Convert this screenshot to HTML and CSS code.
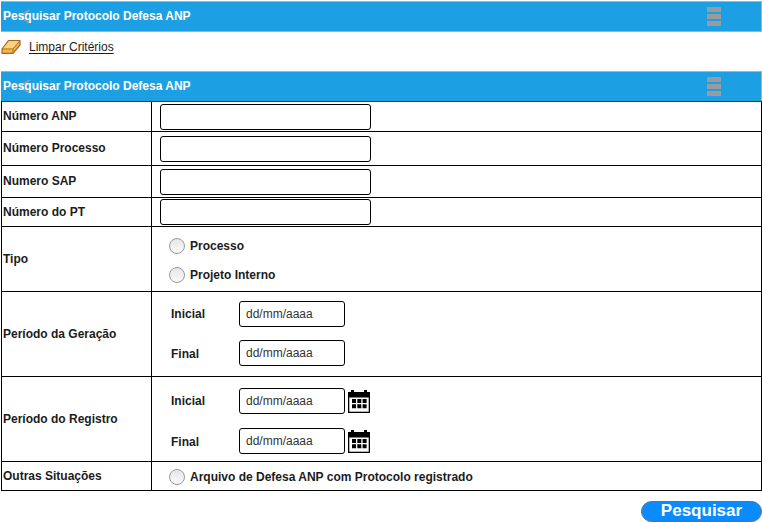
FILE: index.html
```html
<!DOCTYPE html>
<html lang="pt-BR">
<head>
<meta charset="utf-8">
<title>Pesquisar Protocolo Defesa ANP</title>
<link rel="stylesheet" href="styles.css">
</head>
<body>
<svg class="defs" width="0" height="0" aria-hidden="true">
  <symbol id="calendar" viewBox="0 0 22 23">
    <path d="M3 0h3v2h10V0h3v2h3v21H0V2h3z" fill="#000"/>
    <path d="M1.300 7.500h19.400v14.200H1.300z" fill="#fff"/>
    <path d="M4 9h4v4H4zM9.300 9h4v4h-4zM14.600 9h4v4h-4zM4 14.300h4v4H4zM9.300 14.300h4v4h-4zM14.600 14.300h4v4h-4z" fill="#000"/>
  </symbol>
</svg>
<header class="bar">
  <svg class="back" viewBox="0 0 12 16"><path d="M11.500 1 2 7.500l9.500 6.500" fill="none" stroke="#999ba0" stroke-width="2"/></svg>
  <span class="title">Pesquisar Protocolo Defesa ANP</span>
  <span class="menu"><i></i><i></i><i></i></span>
</header>
<nav class="tools">
  <svg class="eraser" viewBox="0 0 20 16"><path d="M1 10 7.500 1.500H19v4.500L12 14.300H1z" fill="#f3b54c" stroke="#a5661c" stroke-width="1.200" stroke-linejoin="round"/><path d="M2.200 9.500 8 2.200h9.800L12 9.500z" fill="#fbd283"/><path d="M1.200 10H12l6.800-8M12 10v4" fill="none" stroke="#b3741f"/></svg>
  <a class="clear">Limpar Critérios</a>
</nav>
<main>
  <header class="bar">
    <svg class="back" viewBox="0 0 12 16"><path d="M11.500 1 2 7.500l9.500 6.500" fill="none" stroke="#999ba0" stroke-width="2"/></svg>
    <span class="title">Pesquisar Protocolo Defesa ANP</span>
    <span class="menu"><i></i><i></i><i></i></span>
  </header>
  <form class="form">
    <div class="label">Número ANP</div><div class="cell r1"><input class="text" type="text"></div>
    <div class="label">Número Processo</div><div class="cell r2"><input class="text" type="text"></div>
    <div class="label">Numero SAP</div><div class="cell r3"><input class="text" type="text"></div>
    <div class="label">Número do PT</div><div class="cell r4"><input class="text" type="text"></div>
    <div class="label">Tipo</div>
    <div class="cell types">
      <label class="option"><input type="radio" name="tipo"><span>Processo</span></label>
      <label class="option"><input type="radio" name="tipo"><span>Projeto Interno</span></label>
    </div>
    <div class="label">Período da Geração</div>
    <div class="cell period p1">
      <div class="date"><span class="when">Inicial</span><input type="text" placeholder="dd/mm/aaaa"></div>
      <div class="date"><span class="when low">Final</span><input type="text" placeholder="dd/mm/aaaa"></div>
    </div>
    <div class="label">Período do Registro</div>
    <div class="cell period p2">
      <div class="date"><span class="when">Inicial</span><input type="text" placeholder="dd/mm/aaaa"><svg class="cal"><use href="#calendar"/></svg></div>
      <div class="date"><span class="when low">Final</span><input type="text" placeholder="dd/mm/aaaa"><svg class="cal"><use href="#calendar"/></svg></div>
    </div>
    <div class="label">Outras Situações</div>
    <div class="cell other">
      <label class="option"><input type="radio" name="outras"><span>Arquivo de Defesa ANP com Protocolo registrado</span></label>
    </div>
  </form>
</main>
<footer><button class="search" type="button">Pesquisar</button></footer>
</body>
</html>
```

FILE: styles.css
```css
* { box-sizing: border-box; }
body {
  margin: 0;
  padding: 1px 0 0 1px;
  width: 762px;
  height: 522px;
  overflow: hidden;
  background: #fff;
  color: #1c1c1c;
  font: bold 12px/14px "Liberation Sans", Arial, sans-serif;
  letter-spacing: 0;
}
.defs { position: absolute; }
.bar {
  position: relative;
  display: flex;
  align-items: center;
  justify-content: space-between;
  height: 31px;
  padding: 0 41px 0 2px;
  background: #1ca0e3;
  border: solid #6cc6f2;
  border-width: 1px 1px 1px 0;
  color: #fff;
}
.back { position: absolute; left: 17px; top: 7px; width: 12px; height: 16px; }
.title { position: relative; padding-bottom: 2px; }
.menu { display: grid; gap: 2px; width: 14px; margin-right: -1px; }
.menu i { height: 5px; background: #999b9e; }
.tools { display: flex; align-items: center; height: 39px; padding-bottom: 9px; }
.eraser { width: 20px; height: 16px; }
.clear {
  margin-left: 8px;
  font-weight: normal;
  text-decoration: underline;
  text-underline-offset: 2px;
}
main .bar { height: 30px; border-bottom: 0; }
.form {
  display: grid;
  grid-template-columns: 150px 1fr;
  grid-template-rows: 30px 34px 32px 29px 65px 85px 85px 29px;
  border: solid #000;
  border-width: 1px 1px 0 1px;
  border-top-color: #064566;
}
.label, .cell { border-bottom: 1px solid #000; }
.label {
  display: flex;
  align-items: center;
  padding: 0 0 1px 1px;
  border-right: 1px solid #000;
}
.cell { padding-left: 8px; }
input[type="text"] {
  display: block;
  height: 26px;
  margin: 0;
  padding: 0 6px;
  border: 1px solid #000;
  border-radius: 3px;
  background: #fff;
  font: 12px "Liberation Sans", Arial, sans-serif;
}
input::placeholder { color: #333; opacity: 1; }
.text { width: 211px; }
.r1 { padding-top: 2px; }
.r2 { padding-top: 4px; }
.r3 { padding-top: 3px; }
.r4 { padding-top: 1px; }
.types { display: grid; align-content: start; gap: 13px; padding-top: 11px; }
.option { display: flex; align-items: center; gap: 5px; height: 16px; margin-left: 9px; }
input[type="radio"] {
  appearance: none;
  width: 16px;
  height: 16px;
  margin: 0;
  border: 1px solid #999;
  border-radius: 50%;
  background: linear-gradient(#e6e6e6, #fafafa);
}
.period { display: grid; align-content: start; }
.p1 { padding-top: 9px; gap: 13px; }
.p2 { padding-top: 11px; gap: 14px; }
.date { display: flex; align-items: center; height: 26px; }
.when { width: 68px; margin-left: 11px; }
.low { padding-top: 1px; }
.date input { width: 106px; }
.cal { width: 22px; height: 23px; margin-left: 3px; }
.other { padding-top: 7px; }
footer { display: flex; justify-content: flex-end; padding-top: 10px; }
.search {
  width: 121px;
  height: 21px;
  padding: 0 0 2px;
  border: 1px solid #46789e;
  border-radius: 11px;
  background: #0a8cff;
  color: #fff;
  font: bold 17px/17px "Liberation Sans", Arial, sans-serif;
}
```
